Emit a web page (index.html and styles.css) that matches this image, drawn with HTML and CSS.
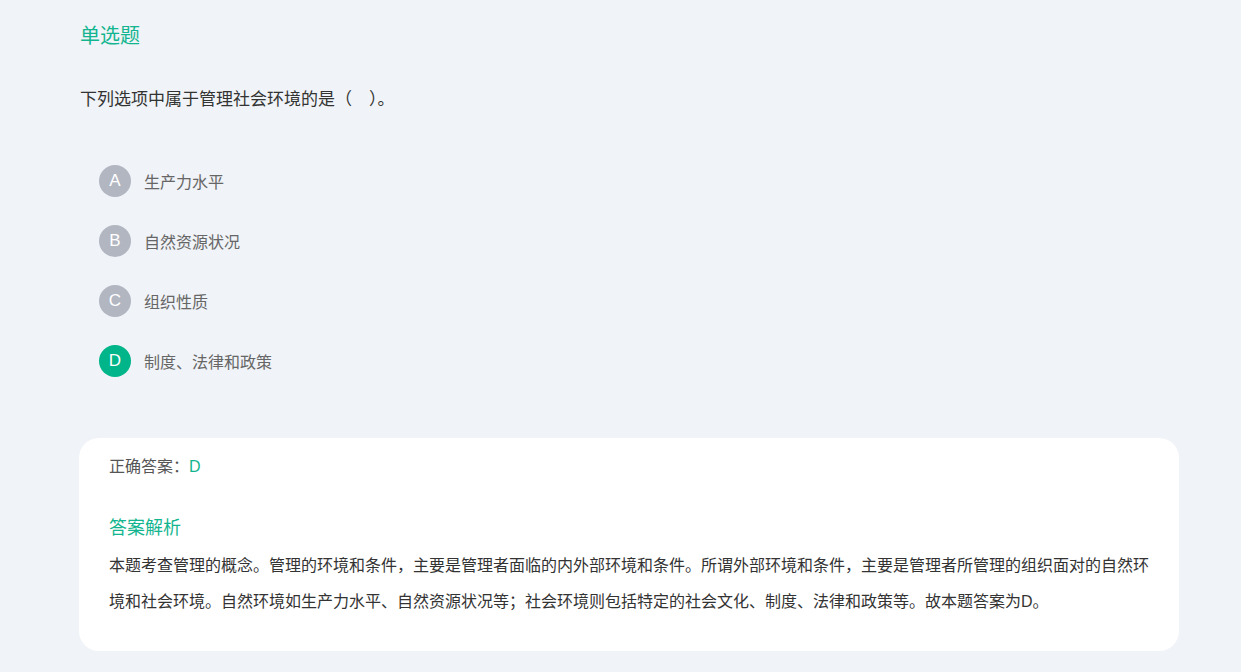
FILE: index.html
```html
<!DOCTYPE html>
<html lang="zh-CN">
<head>
<meta charset="utf-8">
<title>单选题</title>
<link rel="stylesheet" href="styles.css">
</head>
<body>
<main class="page">
  <h2 class="type">单选题</h2>
  <p class="question">下列选项中属于管理社会环境的是（　）。</p>
  <ul class="options">
    <li class="option"><span class="badge">A</span><span class="opt-text">生产力水平</span></li>
    <li class="option"><span class="badge">B</span><span class="opt-text">自然资源状况</span></li>
    <li class="option"><span class="badge">C</span><span class="opt-text">组织性质</span></li>
    <li class="option is-correct"><span class="badge">D</span><span class="opt-text">制度、法律和政策</span></li>
  </ul>
  <section class="card">
    <p class="answer">正确答案：<span class="answer-key">D</span></p>
    <h3 class="analysis-title">答案解析</h3>
    <p class="analysis">本题考查管理的概念。管理的环境和条件，主要是管理者面临的内外部环境和条件。所谓外部环境和条件，主要是管理者所管理的组织面对的自然环境和社会环境。自然环境如生产力水平、自然资源状况等；社会环境则包括特定的社会文化、制度、法律和政策等。故本题答案为D。</p>
  </section>
</main>
</body>
</html>
```

FILE: styles.css
```css
* { box-sizing: border-box; }
html, body {
  margin: 0;
  padding: 0;
  background: #f0f3f7;
}
body {
  font-family: "Liberation Sans", "Noto Sans CJK SC", sans-serif;
  color: #333;
}
.page {
  width: 1100px;
  margin-left: 79px;
  padding-top: 23px;
}
.type {
  margin: 0 0 0 1px;
  font-size: 20px;
  line-height: 26px;
  font-weight: normal;
  color: #12b58f;
}
.question {
  margin: 39px 0 0 1px;
  font-size: 17px;
  line-height: 24px;
  color: #333;
}
.options {
  list-style: none;
  margin: 39px 0 0 0;
  padding: 0 0 0 20px;
}
.option {
  display: flex;
  align-items: center;
  height: 60px;
}
.badge {
  width: 32px;
  height: 32px;
  border-radius: 50%;
  background: #b1b6c1;
  color: #fff;
  font-size: 17px;
  display: flex;
  align-items: center;
  justify-content: center;
  flex-shrink: 0;
}
.is-correct .badge {
  background: #00b589;
}
.opt-text {
  margin-left: 13px;
  font-size: 16px;
  color: #666;
}
.card {
  margin-top: 47px;
  background: #fff;
  border-radius: 20px;
  padding: 17px 30px 31px;
}
.answer {
  margin: 0;
  font-size: 16px;
  line-height: 24px;
  color: #555;
}
.answer-key {
  color: #12b58f;
}
.analysis-title {
  margin: 37px 0 0 0;
  font-size: 18px;
  line-height: 24px;
  font-weight: normal;
  color: #12b58f;
}
.analysis {
  margin: 8px 0 0 0;
  font-size: 16px;
  line-height: 36px;
  color: #333;
}
```
